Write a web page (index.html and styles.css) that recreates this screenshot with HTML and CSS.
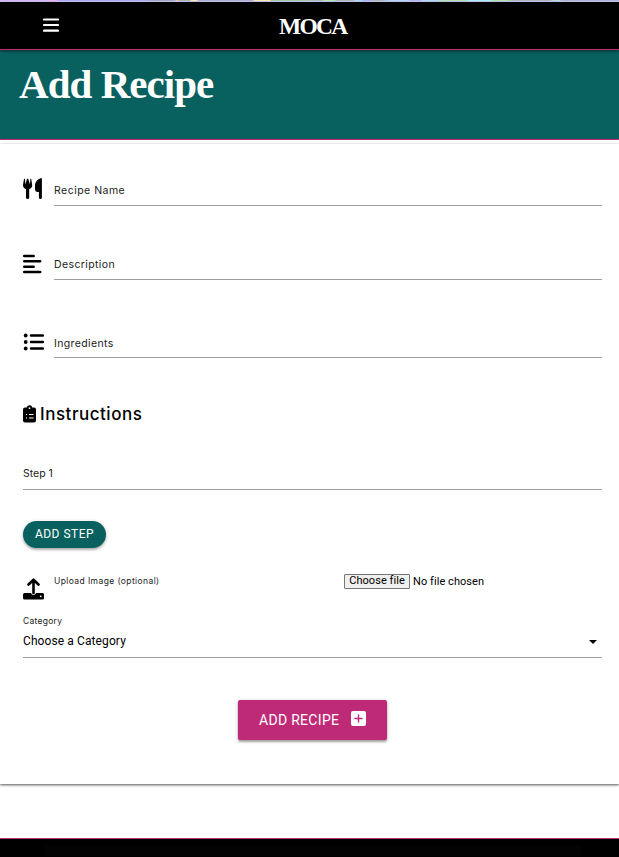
FILE: index.html
```html
<!DOCTYPE html>
<html lang="en">
<head>
<meta charset="utf-8">
<title>MOCA - Add Recipe</title>
<link rel="stylesheet" href="styles.css">
</head>
<body>
<div class="strip"></div>
<header class="nav">
  <svg class="menu" viewBox="0 0 16 14"><path d="M1 1.500h14M1 7h14M1 12.700h14" stroke="#fff" stroke-width="2.200" stroke-linecap="round"/></svg>
  <span class="brand">MOCA</span>
</header>
<section class="hero"><h1>Add Recipe</h1></section>
<main>
  <form class="card">
    <div class="row name">
      <svg width="20" height="22" viewBox="0 0 20 22"><path d="M1 1 0 7q0 3 3 4v8.500a1.500 1.500 0 0 0 3.200 0V11q3-1 3-4l-1-6q-.3-.8-.9 0L7 6.500 5.300 1q-.7-.8-1.400 0L2.500 6.500 1.900 1Q1.300.3 1 1ZM18 0q.9 0 .9 1v18.500a1.500 1.500 0 0 1-3 0V14H14q-2-.3-2-3V7q.4-5 6-7Z"/></svg>
      <label class="field">Recipe Name</label>
    </div>
    <div class="row description">
      <svg width="19" height="20" viewBox="0 0 19 20"><path d="M1.200 2h9.500M1.200 7.300h16M1.200 12.700h9.500M1.200 18h16" stroke="#000" stroke-width="2.500" stroke-linecap="round"/></svg>
      <label class="field">Description</label>
    </div>
    <div class="row ingredients">
      <svg width="21" height="18" viewBox="0 0 21 18"><path d="M8 2.500h12M8 9h12M8 15.500h12" stroke="#000" stroke-width="2.500" stroke-linecap="round"/><circle cx="2.700" cy="2.500" r="1.900"/><circle cx="2.700" cy="9" r="1.900"/><circle cx="2.700" cy="15.500" r="1.900"/></svg>
      <label class="field">Ingredients</label>
    </div>
    <h2>
      <svg width="13" height="18" viewBox="0 0 13 18"><path d="M2 2.500h1.700a2.900 2.900 0 0 1 5.600 0H11q2 0 2 2V15.500q0 2-2 2H2q-2 0-2-2V4.500q0-2 2-2Z"/><circle cx="6.500" cy="3.200" r=".9" fill="#fff"/><path d="M3 9.500h1M6 9.500h4.500M3 13h1M6 13h4.500" stroke="#fff" stroke-width="1"/></svg>
      <span>Instructions</span>
    </h2>
    <label class="step">Step 1</label>
    <button class="add-step" type="button">ADD STEP</button>
    <div class="upload">
      <svg width="21" height="22" viewBox="0 0 21 22"><path d="M10.500 15V2M5.500 6.500l5-4.800 5 4.800" fill="none" stroke="#000" stroke-width="2.600" stroke-linecap="round" stroke-linejoin="round"/><path d="M1.500 15H8q.5 2 2.500 2t2.500-2h6.500q1.500 0 1.500 1.500V20q0 1.500-1.500 1.500h-18Q0 21.500 0 20v-3.500Q0 15 1.500 15Z"/><circle cx="17.700" cy="18.300" r=".9" fill="#fff"/></svg>
      <span class="caption">Upload Image (optional)</span>
      <div class="file"><span class="choose">Choose file</span><span>No file chosen</span></div>
    </div>
    <span class="category-label">Category</span>
    <div class="select"><span>Choose a Category</span><svg width="8" height="4" viewBox="0 0 8 4"><path d="M0 0h8L4 4Z"/></svg></div>
    <button class="submit" type="button"><span>ADD RECIPE</span><svg width="15" height="15" viewBox="0 0 15 15"><rect width="15" height="15" rx="2" fill="#fff"/><path d="M4 7.500h7M7.500 4v7" stroke="#bf2a77" stroke-width="1.400" stroke-linecap="round"/></svg></button>
  </form>
</main>
<footer><div class="footer-inner"></div></footer>
</body>
</html>
```
FILE: styles.css
```css
* { box-sizing: border-box; }
body { margin: 0; height: 857px; overflow: hidden; background: #fff; color: #000; font-family: Roboto, sans-serif; }
svg { display: block; flex: none; }
button { border: 0; margin: 0; color: #fff; font-family: Roboto, sans-serif; }
.strip {
  height: 2px;
  background:
    linear-gradient(#d4d2ff, #d4d2ff) 0 1px / 100% 1px no-repeat,
    linear-gradient(90deg, #dfb9ff 0 48px, #ffb0f0 52px 55px, #b5b0ff 60px 140px, #a9adc8 152px 175px, #ffc6a0 176px 178px, #b1bac0 179px 190px, #fff0b0 191px 197px, #b4b4d8 198px 253px, #fff0b0 254px 270px, #a8cfad 271px 310px, #b6c0c0 311px 323px, #b2f0b2 324px 335px, #b6bcc0 336px 354px, #aeddff 355px 362px, #b9b5ff 363px 370px, #b6bcc0 371px 382px, #aeddff 390px 408px, #b9b5ff 410px 420px, #aeddff 422px 435px, #b2e6b2 440px 467px, #aff4ff 468px 490px, #b2e6b2 492px 505px, #b6b8c4 515px 550px, #b2e6dc 554px 560px, #b7bad8 561px);
}
.nav { position: relative; z-index: 1; display: grid; grid-template-columns: 1fr auto 1fr; height: 48px; align-items: start; background: #000; border-bottom: 1px solid #bf2a77; box-shadow: 0 1px 3px #0008; padding: 0 38px 0 43px; }
.menu { width: 16px; height: 14px; margin-top: 16px; }
.brand { width: 66px; margin-top: 9px; font: bold 23.500px/30px "Liberation Serif", serif; color: #fff; letter-spacing: -1.700px; white-space: nowrap; }
.hero { height: 90px; padding: 6px 19px; background: #09615f; border-bottom: 1px solid #bf2a77; }
h1 { margin: 0; color: #fff; font: bold 41px/56px "Liberation Serif", serif; letter-spacing: -.95px; }
main { height: 698px; padding-top: 4px; }
.card { display: flex; flex-direction: column; height: 640px; padding: 0 17px 0 23px; box-shadow: 0 1px 2px #0008, 0 1px 4px #0003; }
.row { display: grid; grid-template-columns: 31px 1fr; align-items: start; }
.field, .step { display: block; border-bottom: 1px solid #9e9e9e; color: #212121; font: 10.500px/16px Inter, sans-serif; letter-spacing: .48px; }
.name { height: 62px; margin-top: 34px; }
.field { height: 28px; padding-top: 5px; }
.description { height: 62px; margin-top: 12px; }
.ingredients { height: 26px; margin-top: 19px; }
.ingredients .field { height: 25px; padding-top: 3px; }
.description .field, .ingredients .field { letter-spacing: .38px; }
.description svg { margin-top: 2px; }
h2 { display: flex; align-items: center; gap: 4px; height: 30px; margin: 40px 0 0; font: 500 17px/30px Inter, sans-serif; letter-spacing: .52px; }
h2 svg { margin-top: -1px; }
.step { height: 31px; margin-top: 30px; padding-top: 7px; letter-spacing: 0; }
.add-step { width: 83px; height: 27px; margin-top: 31px; padding: 0; border-radius: 14px; background: #09615f; box-shadow: 0 2px 2px #0003, 0 1px 4px #0003; font-size: 12px; line-height: 27px; letter-spacing: .5px; }
.upload { display: grid; grid-template-columns: 31px 290px 1fr; height: 50px; padding-top: 24px; align-items: start; }
.upload > svg { margin-top: 6px; }
.caption, .category-label { color: #212121; font: 8.500px/14px Inter, sans-serif; letter-spacing: .4px; }
.caption { padding-top: 2px; }
.file { display: flex; gap: 3px; align-items: center; font-size: 11px; line-height: 15px; letter-spacing: .06px; white-space: nowrap; margin-top: 2px; }
.choose { width: 66px; height: 15px; border: 1px solid #767676; border-radius: 1px; background: #efefef; line-height: 12px; text-align: center; }
.category-label { margin-top: 16px; letter-spacing: .28px; }
.select { display: flex; height: 30px; justify-content: space-between; padding-right: 5px; border-bottom: 1px solid #9e9e9e; font-size: 12px; line-height: 26px; letter-spacing: .1px; }
.select svg { margin-top: 12px; }
.submit { display: flex; align-self: center; width: 149px; height: 40px; margin-top: 42px; padding: 0 21px; justify-content: space-between; align-items: flex-start; border-radius: 2px; background: #bf2a77; box-shadow: 0 2px 2px #0004, 0 1px 4px #0003; font-size: 14px; line-height: 40px; letter-spacing: .3px; }
.submit svg { margin-top: 11px; }
footer { height: 19px; border-top: 1px solid #bf2a77; padding: 7px 38px 0 44px; background: #000; }
.footer-inner { height: 10px; background: #030303; }
```
